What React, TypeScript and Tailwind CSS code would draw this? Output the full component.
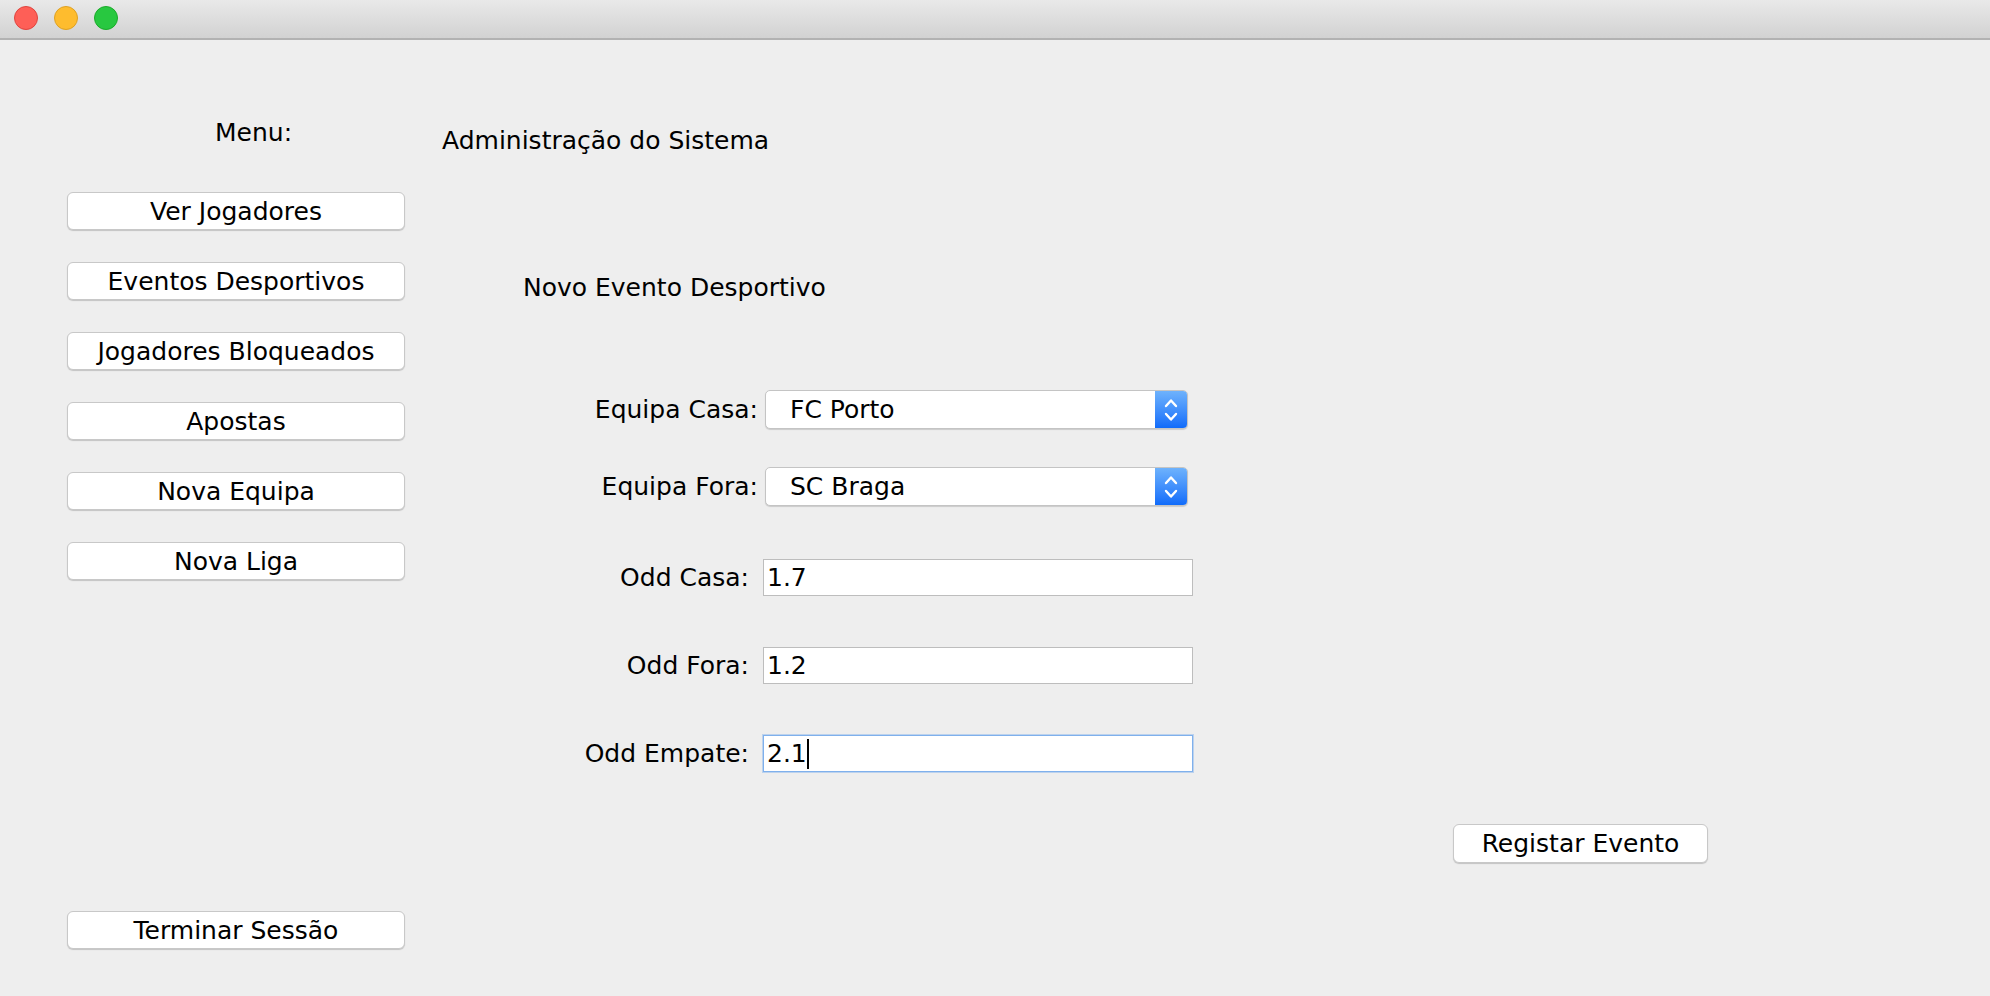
import React from 'react';

const menuItems = ['Ver Jogadores', 'Eventos Desportivos', 'Jogadores Bloqueados', 'Apostas', 'Nova Equipa', 'Nova Liga'];

const MacButton: React.FC<{ label: string; className?: string }> = ({ label, className = '' }) => (
  <button
    className={`h-[38px] bg-white border border-[#c8c8c8] rounded-[6px] shadow-[0_1px_1px_rgba(0,0,0,0.18)] flex items-center justify-center leading-none text-[25px] text-black ${className}`}
  >
    {label}
  </button>
);

const ComboRow: React.FC<{ label: string; value: string }> = ({ label, value }) => (
  <div className="flex items-center">
    <span className="w-[316px] text-right leading-[28px]">{label}</span>
    <div className="ml-[7px] w-[423px] h-[39px] flex bg-white border border-[#c4c4c4] rounded-[5px] shadow-[0_1px_1px_rgba(0,0,0,0.15)] overflow-hidden">
      <span className="flex-1 pl-[24px] flex items-center leading-none">{value}</span>
      <span className="w-[32px] h-full flex items-center justify-center bg-gradient-to-b from-[#6eb2fc] to-[#0f6bfa]">
        <svg width="16" height="30" viewBox="0 0 16 30" fill="none" stroke="white" strokeWidth="2.4" strokeLinecap="round" strokeLinejoin="round">
          <path d="M3 11 L8 5.5 L13 11" />
          <path d="M3 19 L8 24.5 L13 19" />
        </svg>
      </span>
    </div>
  </div>
);

const FieldRow: React.FC<{ label: string; value: string; focused?: boolean }> = ({ label, value, focused }) => (
  <div className="flex items-center">
    <span className="w-[307px] text-right leading-[28px]">{label}</span>
    <div
      className={`ml-[14px] w-[430px] h-[37px] bg-white flex items-center pl-[3px] leading-none ${
        focused ? 'border border-[#7fb0ec] shadow-[0_0_0_1px_rgba(127,176,236,0.45)]' : 'border border-[#bdbdbd]'
      }`}
    >
      <span>{value}</span>
      {focused && <span className="w-[2px] h-[30px] bg-black" />}
    </div>
  </div>
);

export default function App() {
  return (
    <div className="w-[1990px] h-[996px] bg-[#eeeeee] flex flex-col font-['DejaVu_Sans',sans-serif] text-[25px] text-black overflow-hidden">
      {/* title bar */}
      <div className="h-[40px] shrink-0 bg-gradient-to-b from-[#e9e9e9] to-[#d2d2d2] border-b-2 border-[#b2b2b2] flex items-start pt-[6px] pl-[14px] gap-[16px]">
        <span className="w-[24px] h-[24px] rounded-full bg-[#fe5f57] border border-[#e0443e]" />
        <span className="w-[24px] h-[24px] rounded-full bg-[#febc2e] border border-[#dea123]" />
        <span className="w-[24px] h-[24px] rounded-full bg-[#28c840] border border-[#1aab29]" />
      </div>

      <div className="flex flex-1">
        {/* menu */}
        <aside className="w-[405px] shrink-0 pl-[67px] flex flex-col">
          <div className="mt-[79px] ml-[148px] leading-[28px]">Menu:</div>
          <div className="mt-[45px] flex flex-col gap-[32px]">
            {menuItems.map((m) => (
              <MacButton key={m} label={m} className="w-[338px]" />
            ))}
          </div>
          <div className="mt-[331px]">
            <MacButton label="Terminar Sessão" className="w-[338px]" />
          </div>
        </aside>

        {/* content */}
        <main className="flex-1 pl-[37px] flex flex-col">
          <h1 className="mt-[87px] leading-[28px]">Administração do Sistema</h1>
          <h2 className="mt-[119px] ml-[81px] leading-[28px]">Novo Evento Desportivo</h2>

          <div className="mt-[88px] flex flex-col">
            <ComboRow label="Equipa Casa:" value="FC Porto" />
            <div className="mt-[38px]">
              <ComboRow label="Equipa Fora:" value="SC Braga" />
            </div>
            <div className="mt-[53px]">
              <FieldRow label="Odd Casa:" value="1.7" />
            </div>
            <div className="mt-[51px]">
              <FieldRow label="Odd Fora:" value="1.2" />
            </div>
            <div className="mt-[51px]">
              <FieldRow label="Odd Empate:" value="2.1" focused />
            </div>
          </div>

          <div className="mt-[52px] pl-[1011px]">
            <MacButton label="Registar Evento" className="w-[255px] h-[39px]" />
          </div>
        </main>
      </div>
    </div>
  );
}
